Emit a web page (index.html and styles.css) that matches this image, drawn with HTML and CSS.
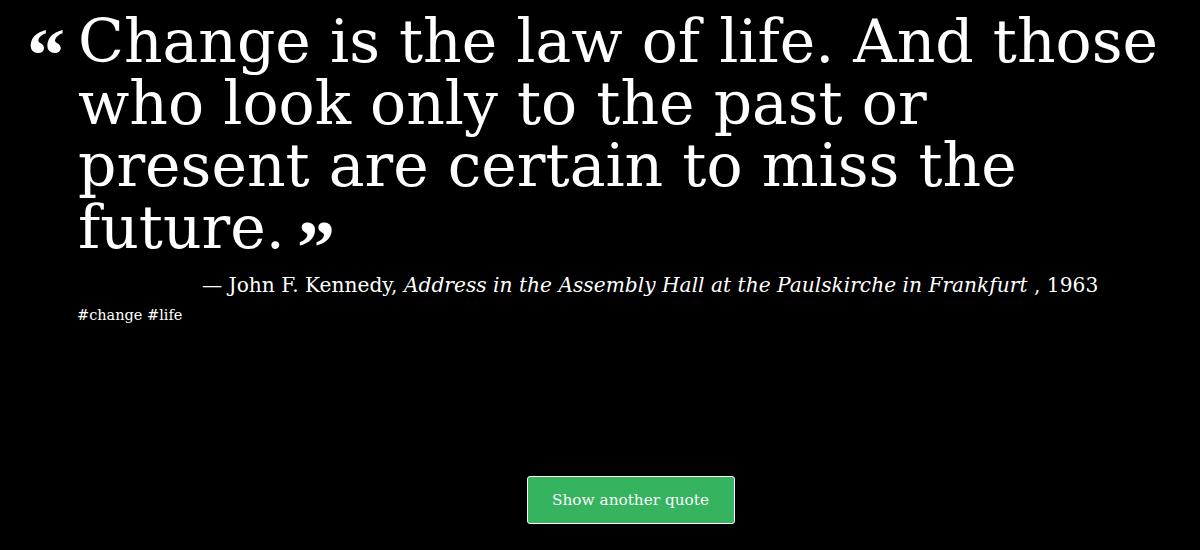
FILE: index.html
```html
<!DOCTYPE html>
<html>
<head>
<meta charset="utf-8">
<link rel="stylesheet" href="styles.css">
</head>
<body>
<main class="page">
  <blockquote class="quote">
    <span class="mark open">“</span>
    <p class="text">Change is the law of life. And those who look only to the past or present are certain to miss the future.<span class="mark close">”</span></p>
  </blockquote>
  <p class="cite">— John F. Kennedy, <em>Address in the Assembly Hall at the Paulskirche in Frankfurt</em> , 1963</p>
  <p class="tags">#change #life</p>
  <div class="actions">
    <button class="btn">Show another quote</button>
  </div>
</main>
</body>
</html>
```
FILE: styles.css
```css
html, body {
  margin: 0;
  background: #000;
  color: #fff;
  height: 100%;
}
.page {
  font-family: "DejaVu Serif", serif;
  padding: 0 30px;
}
.quote {
  margin: 0;
  padding-top: 10px;
  display: flex;
  align-items: flex-start;
}
.mark {
  font-family: "Liberation Serif", serif;
  font-weight: bold;
  font-size: 76px;
  line-height: 1;
}
.open {
  width: 51px;
  margin-left: -3px;
  padding-top: 7px;
  flex: none;
}
.close {
  display: inline-block;
  margin-left: 12px;
  vertical-align: -25px;
  line-height: 0;
}
.text {
  margin: 0;
  font-size: 60px;
  line-height: 62px;
  width: 1090px;
}
.cite {
  margin: 15px 0 0 172px;
  font-size: 20.2px;
}
.cite em {
  font-style: italic;
}
.tags {
  margin: 10px 0 0 47px;
  font-size: 14.5px;
}
.actions {
  display: flex;
  justify-content: center;
  padding-left: 61px;
  margin-top: 153px;
}
.btn {
  background: #35b35f;
  color: #fafafa;
  border: 1px solid #fff;
  border-radius: 3px;
  width: 208px;
  height: 48px;
  font-family: "DejaVu Serif", serif;
  font-size: 15.3px;
}
```
